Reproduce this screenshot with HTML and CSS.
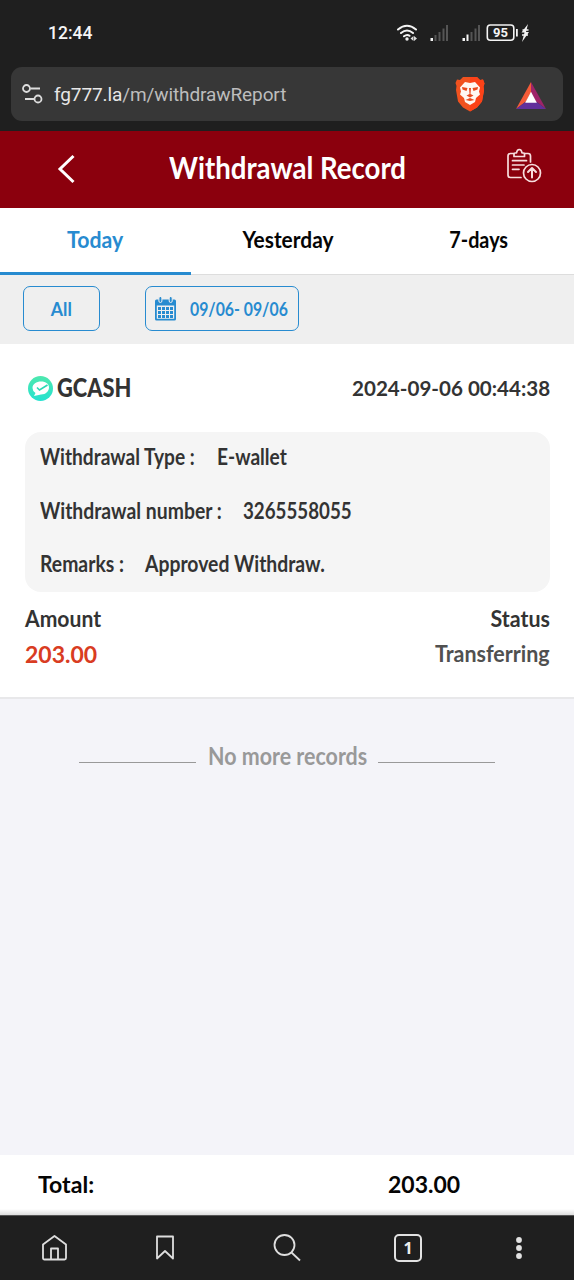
FILE: index.html
```html
<!DOCTYPE html>
<html lang="en">
<head>
<meta charset="utf-8">
<title>Withdrawal Record</title>
<link rel="stylesheet" href="styles.css">
</head>
<body>
<div class="phone">
  <div class="status-bar">
    <span class="clock">12:44</span>
    <svg class="status-icons" width="136" height="20" viewBox="0 0 136 20">
      <g fill="none" stroke="#f4f4f4" stroke-width="2" stroke-linecap="round">
        <path d="M2 6.5Q11 -1 20 6.5M5 10Q11 5 17 10M8 13.3Q11 11 13.5 12.8"/>
      </g>
      <circle cx="11" cy="16" r="1.7" fill="#eee"/>
      <path d="M14.5 15.5l3-2.500v5zM21 15.500l-3-2.500v5z" fill="#ddd"/>
      <g fill="#555"><path d="M38.500 12h2v6h-2zM42.500 9h2v9h-2zM46.500 5.500h2V18h-2zM50 2h2v16h-2zM74.500 9h2v9h-2zM78.500 5.500h2V18h-2zM82 2h2v16h-2z"/></g>
      <path d="M34.500 15h2.500v3h-2.500zM66.500 15h2.500v3h-2.500zM70.500 11.500h2V18h-2z" fill="#f4f4f4"/>
      <rect x="91.300" y="2" width="26.500" height="15.300" rx="3" fill="none" stroke="#f4f4f4" stroke-width="1.600"/>
      <path d="M120 6h1.800v7.500H120zM132 1L125.500 9.500h3L126 19l7-10h-3z" fill="#f4f4f4"/>
      <path d="M126.500 7h6M126 12h6" stroke="#f4f4f4" stroke-width="1.500"/>
      <text class="battery-text" x="104.500" y="14.300" text-anchor="middle">95</text>
    </svg>
  </div>
  <div class="address-bar">
    <svg width="22" height="20" viewBox="0 0 22 20" fill="none" stroke="#dedede" stroke-width="1.800">
      <circle cx="4.500" cy="4.500" r="3.500"/><path d="M8.500 4.500H18M3 15h9"/><circle cx="16" cy="15" r="3.500"/>
    </svg>
    <span class="url"><b>fg777.la</b>/m/withdrawReport</span>
    <svg class="brave" width="30" height="36" viewBox="0 0 30 36">
      <path d="M8 1h14l3 3 3-.5 1.500 4-1 3 .5 4-2 11-5 6-7 4-7-4-5-6L1 14l.5-4-1-3L2 3.500 5 4z" fill="#f1521f"/>
      <path d="M15 1h7l3 3 3-.5 1.500 4-1 3 .5 4-2 11-5 6-7 4z" fill="#fb4218"/>
      <path d="M15 7l5-1 5 5.500-1 4 1 3-4 3.500-1 4-5 3-5-3-1-4L5 18.500l1-3-1-4L10 6z" fill="#fff8f2"/>
      <path d="M7 11l5.500 1-1 3-4-1.500zM23 11l-5.500 1 1 3 4-1.500zM14 12h2l-.5 6 3 1.500-3.500 2-3.500-2 3-1.500zM8 17l2 3M22 17l-2 3M10.500 24l4.500-2 4.500 2-4.500 1z" fill="#e84b20"/>
    </svg>
    <svg class="bat" width="30" height="27" viewBox="0 0 32 28" preserveAspectRatio="none">
      <path d="M16 0L0 28l11-8 5-9z" fill="#f45b38"/><path d="M16 0l16 28-11-8-5-9z" fill="#9e2469"/><path d="M0 28h32l-11-8H11z" fill="#62309b"/><path d="M16 10l6.200 11.500H9.800z" fill="#fff"/>
    </svg>
  </div>
  <header class="header">
    <svg width="20" height="30" viewBox="0 0 20 30" fill="none" stroke="#fff" stroke-width="3"><path d="M17.500 2L4 15l13.500 13"/></svg>
    <h1><span class="fit title">Withdrawal Record</span></h1>
    <svg width="36" height="36" viewBox="0 0 36 36" fill="none" stroke="#f7dede" stroke-width="1.700" stroke-linecap="round" stroke-linejoin="round">
      <path d="M7.500 5.500H4.500Q2 5.500 2 8v19q0 2.500 2.500 2.500H15M18.500 5.500H22q2.500 0 2.500 2.500v6"/>
      <path d="M8 8.500V6q0-1 1-1h1.500Q11 1.500 13.300 1.500T16 5h1.500q1 0 1 1v2.500zM6.500 12.700h14M6.500 17H18M6.500 21.300H13"/>
      <circle cx="26" cy="25" r="8.500"/><path d="M26 29.500v-9M22 24l4-4 4 4" stroke-width="2"/>
    </svg>
  </header>
  <nav class="tabs">
    <div class="tab active"><span class="fit today">Today</span></div>
    <div class="tab"><span class="fit yesterday">Yesterday</span></div>
    <div class="tab"><span class="fit week">7-days</span></div>
  </nav>
  <div class="filters">
    <button class="filter all"><span class="fit all-label">All</span></button>
    <button class="filter range">
      <svg width="22" height="24" viewBox="0 0 22 24" fill="#278bd0">
        <path fill-rule="evenodd" d="M1.500 2.500h18q1.500 0 1.500 1.500v18q0 1.500-1.500 1.500h-18Q0 23.500 0 22V4q0-1.500 1.500-1.500zM1.800 8.500v13.200h17.400V8.500z"/>
        <g stroke="#efefef"><rect x="3.900" y="-.5" width="3" height="6" rx="1.500"/><rect x="14.200" y="-.5" width="3" height="6" rx="1.500"/></g>
        <path d="M3 10h3v3H3zM7 10h3v3H7zM11 10h3v3h-3zM15 10h3v3h-3zM3 14h3v3H3zM7 14h3v3H7zM11 14h3v3h-3zM15 14h3v3h-3zM3 18h3v3H3zM7 18h3v3H7zM11 18h3v3h-3zM15 18h3v3h-3z"/>
      </svg>
      <span class="fit dates">09/06- 09/06</span>
    </button>
  </div>
  <section class="record">
    <div class="record-head">
      <svg width="25" height="25" viewBox="0 0 25 25"><defs><linearGradient id="mint" x2="0" y2="1"><stop stop-color="#4ee8ae"/><stop offset="1" stop-color="#25e2d0"/></linearGradient></defs><circle cx="12.500" cy="12.500" r="12.500" fill="url(#mint)"/><path d="M13 5.500c5 0 8 2.500 8 6s-3 7-8 7l-7 1.500 1.500-3Q4.500 15 4.500 12c0-4 4-6.500 8.500-6.500z" fill="#fff"/><path d="M9 11.500l2.500 2.500 8-5" fill="none" stroke="#2bd8b5" stroke-width="1.600"/></svg>
      <span class="fit gcash">GCASH</span>
      <span class="fit right stamp">2024-09-06 00:44:38</span>
    </div>
    <dl class="details">
      <div class="detail"><dt><span class="fit type">Withdrawal Type :</span></dt><dd><span class="fit wallet">E-wallet</span></dd></div>
      <div class="detail number-row"><dt><span class="fit number">Withdrawal number :</span></dt><dd><span class="fit account">3265558055</span></dd></div>
      <div class="detail remarks-row"><dt><span class="fit remarks">Remarks :</span></dt><dd><span class="fit approved">Approved Withdraw.</span></dd></div>
    </dl>
    <div class="summary"><span class="fit amount">Amount</span><span class="fit right status">Status</span></div>
    <div class="summary values"><span class="fit money">203.00</span><span class="fit right transferring">Transferring</span></div>
  </section>
  <main class="empty"><i></i><span class="fit nomore">No more records</span><i></i></main>
  <div class="total"><span class="total-label"><span class="fit total-word">Total:</span></span><span class="fit total-value">203.00</span></div>
  <footer class="browser-nav">
    <svg width="28" height="28" viewBox="0 0 28 28"><path d="M2 10.500L13.500 2 25 10.500V24q0 1.500-1.500 1.500h-20Q2 25.500 2 24zM10 25V14.500h7V25"/></svg>
    <svg class="bookmark" width="22" height="28" viewBox="0 0 22 28"><path d="M3 2.500h16v22l-8-7.500-8 7.500z"/></svg>
    <svg class="search" width="30" height="30" viewBox="0 0 30 30"><circle cx="12.500" cy="12" r="10"/><path d="M19.500 19.500l8.500 8"/></svg>
    <span class="tab-count">1</span>
    <svg class="dots" width="8" height="26" viewBox="0 0 8 26"><circle cx="4" cy="5" r="2.900"/><circle cx="4" cy="13" r="2.900"/><circle cx="4" cy="21" r="2.900"/></svg>
  </footer>
</div>
</body>
</html>
```
FILE: styles.css
```css
* { box-sizing: border-box; }
body { margin: 0; background: #f4f4f9; font-family: Lato, sans-serif; font-weight: 700; }
svg { display: block; flex: none; }
.phone { width: 574px; height: 1280px; display: flex; flex-direction: column; background: #1f1f1f; overflow: hidden; }
.fit { display: inline-block; white-space: nowrap; transform-origin: left center; }
.right { transform-origin: right center; margin-left: auto; }
.status-bar { height: 67px; flex: none; display: flex; align-items: flex-start; padding: 23px 42px 0 48px; }
.clock { font: 500 17.500px/20px Roboto, sans-serif; color: #f5f5f5; }
.status-icons { margin-left: auto; }
.battery-text { font: 700 13px Roboto, sans-serif; fill: #f4f4f4; }
.address-bar { height: 54px; flex: none; margin: 0 11px 10px; padding: 0 17px 0 11px; border-radius: 11px; background: #373737; display: flex; align-items: center; }
.url { margin-left: 10px; padding-top: 2px; font: 400 19px/24px Roboto, sans-serif; color: #bdbdbd; letter-spacing: -.1px; }
.url b { color: #e7e7e7; font-weight: 400; }
.brave { margin-left: auto; }
.bat { margin: 2px 0 0 31px; }
.header { height: 77px; flex: none; display: flex; align-items: center; background: #8b000d; padding: 0 32px 0 56px; color: #fff; }
.header > svg:first-child { margin-top: -2px; }
.header h1 { flex: 1; margin: -4px 0 0 93px; font-size: 29px; line-height: 34px; }
.header > svg:last-child { margin-top: -7px; }
.title { transform: scale(.952, 1.04); }
.tabs { height: 67px; flex: none; display: grid; grid-template-columns: 191px 191px 192px; background: #fff; border-bottom: 1px solid #ddd; }
.tab { height: 67px; text-align: center; font-size: 22px; line-height: 64px; color: #050505; }
.tab .fit { transform-origin: center; }
.tab .today { transform: scaleX(.966); }
.tab .yesterday { transform: translateX(1px) scaleX(.95); }
.tab .week { transform: translateX(1px) scaleX(.9); }
.tab.active { color: #278bd0; border-bottom: 3px solid #278bd0; }
.filters { height: 69px; flex: none; display: flex; gap: 45px; padding: 11px 23px; background: #efefef; }
.filter { height: 45px; background: transparent; border: 1px solid #278bd0; border-radius: 7px; color: #278bd0; font: 700 19px/43px Lato, sans-serif; padding: 0; }
.all { width: 77px; }
.all .fit { transform: scaleX(.93); transform-origin: center; }
.range { width: 154px; display: flex; align-items: center; padding-left: 9px; gap: 13px; }
.dates { transform: scaleX(.832); }
.record { height: 355px; flex: none; background: #fff; border-bottom: 2px solid #e8e8ea; padding: 26px 24px 0 25px; color: #333; }
.record-head { height: 36px; display: flex; align-items: center; padding-left: 3px; }
.gcash { margin: -2px 0 0 4px; font-size: 26px; font-weight: 900; transform: scaleX(.84); }
.stamp { margin-top: -2px; font-size: 21px; transform: scaleX(.98); }
.details { height: 160px; margin: 26px 0 0; padding: 0 15px; border-radius: 16px; background: #f5f5f5; font-size: 22px; }
.detail { display: grid; grid-template-columns: 177px 1fr; height: 53.500px; line-height: 50px; }
.number-row { grid-template-columns: 203px 1fr; }
.remarks-row { grid-template-columns: 105px 1fr; }
dt, dd { margin: 0; }
.type, .wallet { transform: scaleX(.87); }
.number { transform: scaleX(.88); }
.account { transform: scaleX(.852); }
.remarks, .approved { transform: scaleX(.88); }
.summary { display: flex; height: 34px; align-items: center; margin-top: 10px; font-size: 22px; line-height: 30px; }
.amount { transform: scaleX(.96); }
.status, .transferring { transform: scaleX(.975); }
.values { margin-top: 1px; color: #505050; }
.money { color: #d93c22; font-size: 23px; }
.empty { flex: 1; background: #f4f4f9; display: flex; align-items: flex-start; justify-content: center; padding-top: 40px; color: #999; }
.empty i { width: 117px; height: 1px; margin-top: 23px; background: #999; }
.nomore { width: 159px; margin: 0 11px 0 12px; font-size: 24px; line-height: 34px; transform: scaleX(.893); }
.total { height: 60px; flex: none; display: flex; align-items: center; padding: 0 0 2px 38px; background: linear-gradient(#fff 54px, #ddd); color: #050505; font-size: 22px; }
.total-label { width: 350px; }
.total-word { transform: scale(1.05, 1.05); }
.total-value { font-size: 23px; }
.browser-nav { height: 65px; flex: none; border-top: 1px solid #555; display: flex; align-items: center; padding: 0 50px 0 41px; }
.browser-nav svg { fill: none; stroke: #dedede; stroke-width: 1.800; stroke-linejoin: round; }
.browser-nav .bookmark { margin-left: 85px; }
.browser-nav .search { margin-left: 96px; }
.browser-nav .dots { margin-left: 93px; fill: #e2e2e2; stroke: none; }
.tab-count { margin-left: 92px; width: 28px; height: 28px; border: 2px solid #e2e2e2; border-radius: 5px; color: #eee; text-align: center; font: 700 16px/24px "Noto Sans", sans-serif; }
```
